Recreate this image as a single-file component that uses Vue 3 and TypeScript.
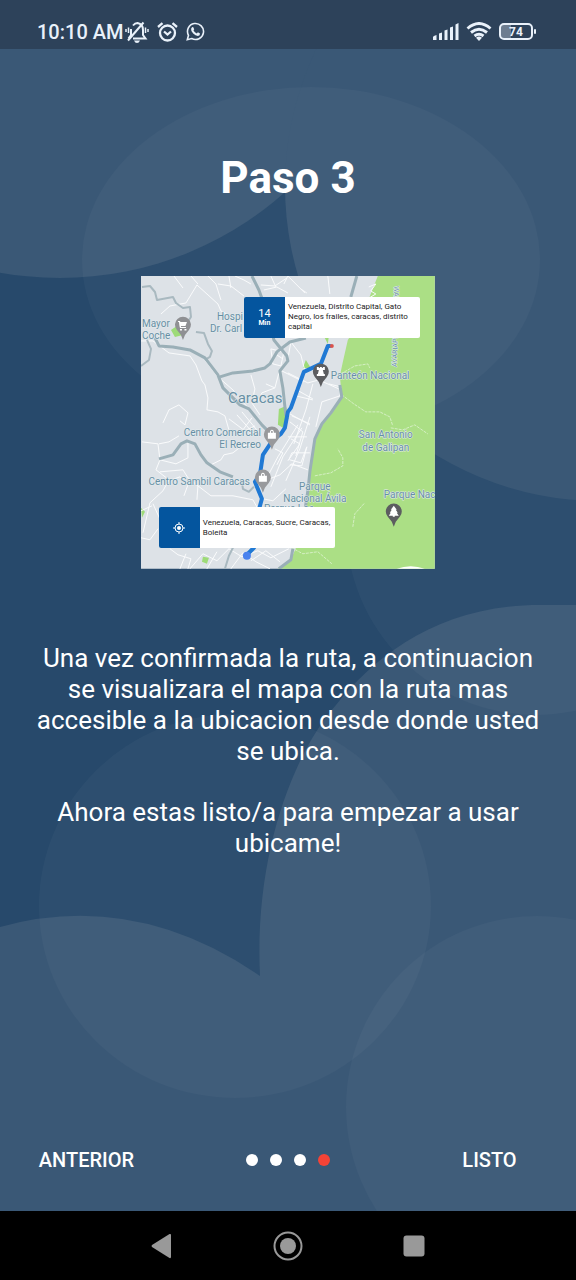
<script setup lang="ts">
import { ref } from 'vue'

interface Pin {
  x: number
  y: number
  kind: 'cart' | 'bag' | 'monument' | 'tree'
  fill: string
}

interface Label {
  x: number
  y: number
  text: string
  anchor: 'start' | 'middle' | 'end'
  size: 'small' | 'city'
}

const steps = [1, 2, 3, 4]
const current = ref(4)

const previous = (): void => {
  current.value = Math.max(1, current.value - 1)
}

const majorRoads: string[] = [
  'M14 62L18 70L32 71L49 74L64 82L77 99L82 112L99 129L108 133L121 149L130 158',
  'M79 101L92 97L112 95L124 92L129 88L136 76L149 66L165 62',
  'M111 0L118 14L126 36L133 64L146 80L147 85L139 95L142 112L145 140',
  'M18 183L32 179L40 168L46 165L54 168L60 179L66 187L79 196L92 201',
  'M216 0L210 21',
  'M199 109L201 121L190 137L181 148L174 163L169 196L167 215L164 235',
  'M152 273L150 284L138 293',
]

const minorRoads: string[] = [
  'M1 11L9 10L14 16L16 24L32 21L35 27L42 32L49 31L50 41L46 47',
  'M55 56L63 57L67 68L71 75L69 81L64 84',
  'M0 90L8 84L10 73L6 64',
  'M101 206L102 213L108 216L113 211',
  'M84 293L88 280L96 264',
]

const streets: string[] = [
  'M20 38L29 30L45 27L56 9L66 18L77 28L80 35L93 42',
  'M33 0L42 12M50 0L57 8M67 0L75 8L80 24M77 8L90 10L103 20M94 0L103 4L110 8M88 0L90 12',
  'M120 9L134 10L146 2M123 14L136 11L147 17M130 0L135 11M147 0L143 8',
  'M0 65L12 65L28 77L49 80L55 89L61 105L64 109L67 122L66 134L77 136L84 140L88 154',
  'M64 84L77 101L92 114L107 132L120 146',
  'M110 99L114 113L111 127L119 139M125 108L134 112L121 117L116 127M138 97L134 112',
  'M22 147L28 134L38 129L47 137L44 149L39 145',
  'M130 73L143 76L140 90L132 88L130 73M136 79L142 83',
  'M147 97L167 107L178 104L198 113M154 113L172 123M149 138L169 149M161 103L151 132L141 157M172 108L165 134L153 168',
  'M139 94L163 106M147 83L150 66L160 79L164 95M155 120L172 124M188 108L200 111L199 120L181 126L175 151',
  'M157 149L137 181L126 202M161 152L142 181L130 211M169 141L159 173L145 205M150 163L159 168L147 185',
  'M149 184L160 187L166 171L161 190L149 189M147 161L166 161M151 140L169 148',
  'M149 146L162 156L155 180M134 173L142 177L136 189M148 184L151 177L169 177',
  'M1 166L17 168L19 184L15 194L28 204L22 215L9 227L2 257',
  'M18 168L28 166L38 160M19 184L35 188L47 182L47 166M19 196L42 194L47 202L57 210L56 224',
  'M68 190L80 184L83 179L92 177L101 170L112 169',
  'M57 210L70 220L92 220L112 224L122 242M28 205L39 201L47 209L43 220',
  'M0 262L9 264L17 253M0 235L11 230M12 228L22 250',
  'M29 273L37 279L50 283L47 293M49 293L62 278L76 285L88 273L101 281L117 275L130 282L148 273',
  'M39 293L45 278M66 293L76 276M90 293L102 277L115 286L129 293M110 285L125 275L139 286',
  'M228 11L235 8L230 15L235 18L225 24L214 30M147 0L164 17M160 13L166 17M187 0L189 18',
  'M88 143L104 155L114 150M96 139L113 158M101 136L120 159M111 142L102 154',
  'M122 223L132 225L145 213M126 204L139 199L151 188L167 194',
]

const trails: string[] = [
  'M201 119L213 128L225 136L239 136L249 141L252 150',
  'M174 200L190 197L202 190L202 182L197 173',
  'M212 251L214 238L224 227',
  'M200 98L214 90L227 88L229 92',
  'M147 270L162 278L177 276L191 288',
  'M250 152L262 154L274 149L287 158',
]

const pins: Pin[] = [
  { x: 42, y: 49, kind: 'cart', fill: '#8f9093' },
  { x: 131, y: 159, kind: 'bag', fill: '#98999c' },
  { x: 122, y: 202, kind: 'bag', fill: '#98999c' },
  { x: 180, y: 96, kind: 'monument', fill: '#5c5d60' },
  { x: 253, y: 236, kind: 'tree', fill: '#5c5d60' },
]

const labels: Label[] = [
  { x: 1, y: 51, text: 'Mayor', anchor: 'start', size: 'small' },
  { x: 1, y: 63, text: 'Coche', anchor: 'start', size: 'small' },
  { x: 76, y: 44, text: 'Hospi', anchor: 'start', size: 'small' },
  { x: 69, y: 56, text: 'Dr. Carl', anchor: 'start', size: 'small' },
  { x: 87, y: 127, text: 'Caracas', anchor: 'start', size: 'city' },
  { x: 190, y: 103, text: 'Panteón Nacional', anchor: 'start', size: 'small' },
  { x: 120, y: 160, text: 'Centro Comercial', anchor: 'end', size: 'small' },
  { x: 120, y: 172, text: 'El Recreo', anchor: 'end', size: 'small' },
  { x: 109, y: 209, text: 'Centro Sambil Caracas', anchor: 'end', size: 'small' },
  { x: 245, y: 162, text: 'San Antonio', anchor: 'middle', size: 'small' },
  { x: 245, y: 175, text: 'de Galipan', anchor: 'middle', size: 'small' },
  { x: 174, y: 214, text: 'Parque', anchor: 'middle', size: 'small' },
  { x: 174, y: 226, text: 'Nacional Ávila', anchor: 'middle', size: 'small' },
  { x: 123, y: 236, text: 'Parque Los', anchor: 'start', size: 'small' },
  { x: 243, y: 222, text: 'Parque Nac', anchor: 'start', size: 'small' },
]
</script>

<template>
  <div class="screen">
    <header class="status">
      <div class="status-left">
        <span class="time">10:10 AM</span>
        <svg class="bell" viewBox="0 0 24 22" aria-hidden="true">
          <g fill="none" stroke="currentColor" stroke-width="2">
            <path d="M8 4.500Q10 2 12.500 2Q18 3 18 9V14L20.500 17.500H8" />
            <path d="M6 8V14L3.500 17.500" />
            <path d="M18.500 1.500L3 19.500" />
            <path d="M3.500 6.500V12M1 8V11M20.500 6.500V12M23 8V11" stroke-width="1.500" />
          </g>
          <path d="M9 19.500H15Q14 22 12 22T9 19.500Z" fill="currentColor" />
        </svg>
        <svg class="alarm" viewBox="0 0 21 20" aria-hidden="true">
          <g fill="none" stroke="currentColor" stroke-width="2.300">
            <circle cx="10.500" cy="11" r="7.500" />
            <path d="M1 5L5.500 1.200M20 5L15.500 1.200" />
            <path d="M7 9.500L10.500 12.500L14 9.500" />
          </g>
        </svg>
        <svg class="whats" viewBox="0 0 19 19" aria-hidden="true">
          <path d="M1.300 17.700L2.500 13.300A8 8 0 1 1 5.700 16.500Z" fill="none" stroke="currentColor" stroke-width="1.600" />
          <path d="M6 5.200Q6.700 4.600 7.300 5.200L8.200 7.200L7.500 8.400Q8.700 10.500 10.800 11.400L11.900 10.300L14 11.400Q14.200 13.700 11.900 14Q9.500 14 7.200 11.600Q4.700 9 5.100 6.700Z" fill="currentColor" />
        </svg>
      </div>
      <div class="status-right">
        <svg class="signal" viewBox="0 0 26 17" aria-hidden="true">
          <path d="M0 14Q0 13 3.500 12V17H0ZM6 10.500L9 9.500V17H6ZM11.500 7.500L14.500 6.500V17H11.500ZM17 4.500L20 3.500V17H17ZM22.500 1.500L25.500 0V17H22.500Z" fill="currentColor" />
        </svg>
        <svg class="wifi" viewBox="0 0 26 19" aria-hidden="true">
          <g fill="none" stroke="currentColor" stroke-width="2.900">
            <path d="M1.500 6.500Q13-3.500 24.500 6.500" />
            <path d="M5 10.500Q13 4 21 10.500" />
            <path d="M8.500 14Q13 10.500 17.500 14" />
          </g>
          <path d="M10 15.700Q13 13.500 16 15.700L13 19Z" fill="currentColor" />
        </svg>
        <span class="battery"><span class="cell">74</span></span>
      </div>
    </header>

    <main class="slide">
      <svg class="backdrop" viewBox="0 49 576 1162" preserveAspectRatio="none" aria-hidden="true">
        <rect y="49" width="576" height="1162" fill="#27496b" />
        <path d="M260 976C254 850 296 750 336 705C376 655 440 605 540 605H576V1211H0V927Q135 890 260 976Z" fill="#3a5876" />
        <circle class="veil" cx="536" cy="525" r="190" />
        <circle cx="60" cy="-60" r="338" fill="#3a5876" />
        <circle cx="600" cy="186" r="315" fill="#3a5876" />
        <ellipse class="veil" cx="311" cy="260" rx="229" ry="173" />
        <ellipse class="veil" cx="235" cy="906" rx="196" ry="192" />
        <circle class="veil" cx="537" cy="1107" r="191" />
      </svg>

      <h1>Paso 3</h1>

      <figure class="map">
        <svg viewBox="0 0 294 293" role="img" aria-label="Mapa de Caracas con la ruta">
          <rect width="294" height="293" fill="#dde2e7" />
          <path d="M237 0L226 28L217 49L207 64L202 86L199 100L201 120L190 137L180 149L174 163L169 196L167 215L163 240L156 270L150 284L137 293H294V0Z" fill="#abdf85" />
          <g fill="#9edb78">
            <path d="M138 133L145 130L148 142L142 152L137 149ZM30 54L39 48L42 59L34 61ZM162 92L165 84L170 92ZM0 232L4 236L1 242ZM62 281L68 282L66 288L61 286ZM184 62L188 60L187 68Z" />
          </g>
          <g class="trail"><path v-for="d in trails" :key="d" :d="d" /></g>
          <g class="street"><path v-for="d in streets" :key="d" :d="d" /></g>
          <g class="minor"><path v-for="d in minorRoads" :key="d" :d="d" /></g>
          <g class="major"><path v-for="d in majorRoads" :key="d" :d="d" /></g>
          <path class="route" d="M190 70H187L180 88L163 96L150 132L147 136L144 152L140 158L132 164L122 179L119 199L114 206L121 223L118 234L118 262L113 272L106 279" />
          <circle cx="191" cy="70" r="2" fill="#d9534c" />
          <circle cx="106" cy="280" r="4" fill="#4a82ee" />
          <path d="M256 293Q270 288 284 293Z" fill="#fff" />

          <g v-for="pin in pins" :key="`${pin.x}-${pin.y}`" :transform="`translate(${pin.x} ${pin.y})`">
            <path d="M0 15L-2 10L-6 5A8 8 0 1 1 6 5L2 10Z" :fill="pin.fill" />
            <path v-if="pin.kind === 'cart'" d="M-5-4H-3L-2.500-3H4L2.500 1H-2L-2 2H3V3H-3L-3.500 1L-4-3H-5ZM-3 4H-1V5.500H-3ZM1.500 4H3.500V5.500H1.500Z" fill="#fff" />
            <path v-else-if="pin.kind === 'bag'" fill-rule="evenodd" d="M-4-2H-2Q-2-5 0-5T2-2H4V4H-4ZM-1-2H1Q1-4 0-4T-1-2Z" fill="#fff" />
            <path v-else-if="pin.kind === 'monument'" d="M-4-5H-2V-4H-1V-5H1V-4H2V-5H4V-2H2L3 2H4V4H-4V2H-3L-2-2H-4Z" fill="#fff" />
            <path v-else d="M0-6L3-2H2L4 1H3L5 4H1V5H-1V4H-5L-3 1H-4L-2-2H-3Z" fill="#fff" />
          </g>

          <text class="label tiny" transform="translate(253 10) rotate(90)">WARAIRA</text>
          <text class="label tiny" transform="translate(256 91) rotate(-88)">AVARIAPI</text>
          <text
            v-for="label in labels"
            :key="label.text"
            class="label"
            :class="label.size"
            :x="label.x"
            :y="label.y"
            :text-anchor="label.anchor"
          >{{ label.text }}</text>
        </svg>

        <div class="card destination">
          <div class="badge"><span class="minutes">14</span><strong>Min</strong></div>
          <p>Venezuela, Distrito Capital, Gato Negro, los frailes, caracas, distrito capital</p>
        </div>
        <div class="card origin">
          <div class="badge">
            <svg viewBox="0 0 12 12" aria-hidden="true">
              <circle cx="6" cy="6" r="4" fill="none" stroke="#fff" />
              <circle cx="6" cy="6" r="2" fill="#fff" />
              <path d="M6 0V2M6 10V12M0 6H2M10 6H12" stroke="#fff" />
            </svg>
          </div>
          <p>Venezuela, Caracas, Sucre, Caracas, Boleíta</p>
        </div>
      </figure>

      <div class="copy">
        <p>Una vez confirmada la ruta, a continuacion se visualizara el mapa con la ruta mas accesible a la ubicacion desde donde usted se ubica.</p>
        <p>Ahora estas listo/a para empezar a usar ubicame!</p>
      </div>

      <div class="pager">
        <button type="button" class="action" @click="previous">ANTERIOR</button>
        <div class="dots">
          <button
            v-for="step in steps"
            :key="step"
            type="button"
            class="dot"
            :class="{ active: step === current }"
            :aria-label="`Pantalla ${step}`"
            @click="current = step"
          ></button>
        </div>
        <button type="button" class="action">LISTO</button>
      </div>
    </main>

    <nav class="system" aria-label="Sistema">
      <button type="button" aria-label="Atrás">
        <svg viewBox="0 0 30 30"><path d="M5 14Q4 15 5 16L22.500 27Q24 27.500 24 26V4Q24 2.500 22.500 3Z" fill="#999" /></svg>
      </button>
      <button type="button" aria-label="Inicio">
        <svg viewBox="0 0 30 30"><circle cx="15" cy="15" r="13.500" fill="none" stroke="#999" stroke-width="2" /><circle cx="15" cy="15" r="8" fill="#999" /></svg>
      </button>
      <button type="button" aria-label="Recientes">
        <svg viewBox="0 0 30 30"><rect x="4.500" y="4.500" width="21" height="21" rx="3" fill="#999" /></svg>
      </button>
    </nav>
  </div>
</template>

<style>
body {
  margin: 0;
  background: #000;
}
</style>

<style scoped>
.screen {
  display: flex;
  flex-direction: column;
  min-height: 100vh;
  font-family: Roboto, "Liberation Sans", sans-serif;
  color: #fff;
}

button {
  padding: 0;
  border: 0;
  background: none;
  color: inherit;
  font: inherit;
  cursor: pointer;
}

.status {
  display: flex;
  justify-content: space-between;
  align-items: center;
  box-sizing: border-box;
  height: 49px;
  padding: 14px 40px 0 37px;
  background: #2d425a;
  color: #e9f1fa;
}

.status-left,
.status-right {
  display: flex;
  align-items: center;
}

.status-right {
  gap: 7px;
}

.time {
  margin-right: 2px;
  font-size: 20px;
  line-height: 24px;
  font-weight: 500;
}

.bell { width: 24px; height: 22px; margin-right: 8px; }
.alarm { width: 21px; height: 20px; margin-right: 8px; }
.whats { width: 19px; height: 19px; }
.signal { width: 26px; height: 17px; }
.wifi { width: 26px; height: 19px; }

.battery {
  display: flex;
  align-items: center;
}

.battery::after {
  content: "";
  width: 2px;
  height: 5px;
  margin-left: 1px;
  border-radius: 1px;
  background: currentColor;
}

.cell {
  box-sizing: border-box;
  width: 34px;
  height: 17px;
  border: 2px solid currentColor;
  border-radius: 5px;
  background: linear-gradient(90deg, #6d7d90 32%, transparent 32%);
  font-size: 12px;
  line-height: 14px;
  font-weight: 700;
  text-align: center;
}

.slide {
  position: relative;
  z-index: 0;
  display: flex;
  flex: 1;
  flex-direction: column;
  align-items: center;
  overflow: hidden;
}

.backdrop {
  position: absolute;
  inset: 0;
  z-index: -1;
  width: 100%;
  height: 100%;
}

.veil {
  fill: #fff;
  fill-opacity: 0.03;
}

h1 {
  margin: 103px 0 0;
  font-size: 44px;
  line-height: 52px;
  font-weight: 700;
}

.map {
  position: relative;
  width: 51%;
  margin: 72px 0 0;
}

.map > svg {
  display: block;
  width: 100%;
}

.trail, .street, .minor, .major, .route {
  fill: none;
  stroke-linejoin: round;
}

.trail { stroke: #d5efc4; stroke-dasharray: 3 1; }
.street { stroke: #fafbfc; }
.minor { stroke: #a9b9c0; stroke-width: 2px; }
.major { stroke: #9aafb7; stroke-width: 3px; }
.route { stroke: #2079d4; stroke-width: 4px; }

.label {
  fill: #668fa4;
  stroke: #e6edef;
  stroke-width: 1px;
  stroke-linejoin: round;
  paint-order: stroke;
  font-size: 10px;
}

.city { font-size: 15px; }
.tiny { font-size: 7px; }

.card {
  position: absolute;
  display: flex;
  width: 60%;
  height: 14%;
  overflow: hidden;
  border-radius: 2px;
  background: #fff;
  color: #222;
}

.destination { left: 35%; top: 21px; }
.origin { left: 6%; top: 79%; }

.badge {
  display: flex;
  flex: none;
  flex-direction: column;
  align-items: center;
  justify-content: center;
  width: 41px;
  background: #04559e;
  color: #fff;
  font-size: 7px;
  line-height: 8px;
}

.badge svg {
  width: 12px;
  height: 12px;
}

.minutes {
  font-size: 11px;
  line-height: 11px;
}

.card p {
  align-self: center;
  margin: 0 0 0 3px;
  font-size: 8px;
  line-height: 10px;
}

.copy {
  box-sizing: border-box;
  width: 100%;
  margin-top: 74px;
  padding: 0 28px;
  font-size: 26px;
  line-height: 31px;
  text-align: center;
}

.copy p {
  margin: 0 0 30px;
}

.pager {
  display: flex;
  align-items: center;
  justify-content: space-between;
  box-sizing: border-box;
  width: 100%;
  margin-top: auto;
  padding: 0 38px 39px;
}

.action {
  min-width: 97px;
  font-size: 20px;
  line-height: 24px;
  font-weight: 500;
}

.dots {
  display: flex;
  gap: 12px;
}

.dot {
  width: 12px;
  height: 12px;
  border-radius: 50%;
  background: #fff;
}

.dot.active {
  background: #f44336;
}

.system {
  display: flex;
  align-items: center;
  justify-content: center;
  gap: 96px;
  height: 69px;
  background: #000;
}

.system svg {
  display: block;
  width: 30px;
  height: 30px;
}
</style>
